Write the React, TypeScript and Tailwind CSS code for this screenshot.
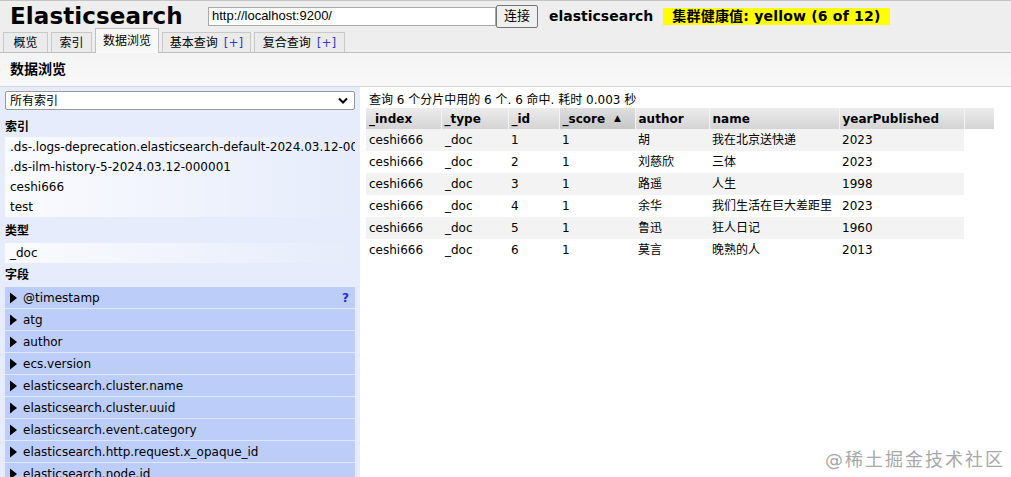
import React from 'react';

const tabs = [
  { label: '概览', w: 'w-[45px]', active: false, plus: false },
  { label: '索引', w: 'w-[41px]', active: false, plus: false },
  { label: '数据浏览', w: 'w-[64px]', active: true, plus: false },
  { label: '基本查询', w: 'w-[89px]', active: false, plus: true },
  { label: '复合查询', w: 'w-[91px]', active: false, plus: true },
];

const indices = [
  '.ds-.logs-deprecation.elasticsearch-default-2024.03.12-000001',
  '.ds-ilm-history-5-2024.03.12-000001',
  'ceshi666',
  'test',
];

const fields = [
  '@timestamp',
  'atg',
  'author',
  'ecs.version',
  'elasticsearch.cluster.name',
  'elasticsearch.cluster.uuid',
  'elasticsearch.event.category',
  'elasticsearch.http.request.x_opaque_id',
  'elasticsearch.node.id',
  'elasticsearch.node.name',
];

const columns = [
  { key: '_index', w: 'w-[75px]' },
  { key: '_type', w: 'w-[67px]' },
  { key: '_id', w: 'w-[51px]' },
  { key: '_score', w: 'w-[76px]' },
  { key: 'author', w: 'w-[74px]' },
  { key: 'name', w: 'w-[130px]' },
  { key: 'yearPublished', w: 'w-[125px]' },
];

const rows = [
  ['ceshi666', '_doc', '1', '1', '胡', '我在北京送快递', '2023'],
  ['ceshi666', '_doc', '2', '1', '刘慈欣', '三体', '2023'],
  ['ceshi666', '_doc', '3', '1', '路遥', '人生', '1998'],
  ['ceshi666', '_doc', '4', '1', '余华', '我们生活在巨大差距里', '2023'],
  ['ceshi666', '_doc', '5', '1', '鲁迅', '狂人日记', '1960'],
  ['ceshi666', '_doc', '6', '1', '莫言', '晚熟的人', '2013'],
];

function Header() {
  return (
    <div className="h-[31px] bg-[#eeeeee] border-t border-[#c4c4c4] flex items-center shrink-0">
      <div className="pl-[10px] w-[208px] text-[23px] font-bold text-black leading-none tracking-[0.1px]">
        Elasticsearch
      </div>
      <input
        readOnly
        value="http://localhost:9200/"
        className="w-[288px] h-[19px] bg-white border border-[#a9a9a9] px-[3px] text-[13px] font-['Liberation_Sans',sans-serif] text-black outline-none"
      />
      <button className="h-[23px] w-[42px] bg-[#efefef] border border-[#767676] rounded-[2px] text-[13px] text-black flex items-center justify-center">
        连接
      </button>
      <span className="ml-[11px] text-[14px] font-bold text-black">elasticsearch</span>
      <span className="ml-[10px] h-[17px] bg-[#ffff00] px-[9px] text-[14px] font-bold text-black flex items-center tracking-[0.2px]">
        集群健康值: yellow (6 of 12)
      </span>
    </div>
  );
}

function Tabs() {
  return (
    <div className="h-[22px] bg-[#eeeeee] border-b border-[#c0c0c0] flex items-end pl-[3px] gap-[3px] shrink-0">
      {tabs.map((t) => (
        <div
          key={t.label}
          className={
            t.active
              ? `${t.w} h-[25px] -mb-px bg-[#f8f8f8] border border-b-0 border-[#c0c0c0] flex items-center justify-center text-[12px] text-black`
              : `${t.w} h-[20px] bg-[#ebebeb] border border-b-0 border-[#c8c8c8] flex items-center justify-center text-[12px] text-black`
          }
        >
          {t.label}
          {t.plus && <span className="ml-[6px] text-[#3a3ac8]">[+]</span>}
        </div>
      ))}
    </div>
  );
}

function Sidebar() {
  return (
    <div className="w-[360px] shrink-0 bg-[#e6ecfb] px-[5px] pt-[4px] overflow-hidden">
      <div className="h-[19px] bg-white border border-[#9a9a9a] rounded-[2px] flex items-center justify-between pl-[4px] pr-[6px] text-[12px] text-black">
        <span>所有索引</span>
        <svg width="10" height="7" viewBox="0 0 10 7">
          <path d="M1 1.5 L5 5.5 L9 1.5" fill="none" stroke="#000" strokeWidth="2" />
        </svg>
      </div>
      <div className="mt-[6px] h-[21px] flex items-center text-[12px] font-bold text-black">索引</div>
      {indices.map((i) => (
        <div
          key={i}
          className="h-[20px] flex items-center pl-[5px] text-[12px] text-black whitespace-nowrap overflow-hidden bg-gradient-to-r from-white/80 via-white/40 to-transparent"
        >
          {i}
        </div>
      ))}
      <div className="mt-[2px] h-[24px] flex items-center text-[12px] font-bold text-black">类型</div>
      <div className="h-[20px] flex items-center pl-[5px] text-[12px] text-black bg-gradient-to-r from-white/80 via-white/40 to-transparent">
        _doc
      </div>
      <div className="h-[24px] flex items-center text-[12px] font-bold text-black">字段</div>
      {fields.map((f, idx) => (
        <div
          key={f}
          className="h-[22px] bg-[#bccdfa] border-b border-[#dfe7fd] flex items-center pl-[4px] pr-[6px] text-[12px] text-black whitespace-nowrap"
        >
          <svg width="9" height="12" viewBox="0 0 9 12" className="mr-[5px] shrink-0">
            <path d="M1 0.5 L8 6 L1 11.5 Z" fill="#000" />
          </svg>
          <span className="flex-1">{f}</span>
          {idx === 0 && <span className="font-bold text-[#2a2ad0]">?</span>}
        </div>
      ))}
    </div>
  );
}

function Results() {
  return (
    <div className="flex-1 bg-white pt-[5px] overflow-hidden">
      <div className="pl-[9px] h-[16px] leading-[16px] text-[12px] text-black">
        查询 6 个分片中用的 6 个. 6 命中. 耗时 0.003 秒
      </div>
      <table className="ml-[6px] table-fixed border-collapse text-[12px] text-black">
        <thead>
          <tr className="h-[21px]">
            {columns.map((c) => (
              <th
                key={c.key}
                className={
                  c.key === '_score'
                    ? `${c.w} p-0 pl-[3px] text-left font-bold border-r border-[#f4f4f4] bg-gradient-to-b from-[#dedede] to-[#c6c6c6]`
                    : `${c.w} p-0 pl-[3px] text-left font-bold border-r border-[#f4f4f4] bg-gradient-to-b from-[#ececec] to-[#d4d4d4]`
                }
              >
                {c.key === '_score' ? (
                  <span className="flex items-center">
                    _score
                    <span className="ml-[9px] text-[9px]">▲</span>
                  </span>
                ) : (
                  c.key
                )}
              </th>
            ))}
            <th className="w-[30px] p-0 bg-gradient-to-b from-[#ececec] to-[#d4d4d4]" />
          </tr>
        </thead>
        <tbody>
          {rows.map((r, ri) => (
            <tr key={ri} className="h-[22px]">
              {r.map((v, ci) => (
                <td
                  key={ci}
                  className={`p-0 whitespace-nowrap overflow-hidden ${ri % 2 === 0 ? 'bg-[#f3f3f3]' : 'bg-white'} ${ci === 1 ? 'pl-[4px]' : 'pl-[3px]'}`}
                >
                  {v}
                </td>
              ))}
              <td className="p-0 bg-white" />
            </tr>
          ))}
        </tbody>
      </table>
    </div>
  );
}

export default function App() {
  return (
    <div className="relative w-[1011px] h-[477px] overflow-hidden flex flex-col bg-white font-['DejaVu_Sans','Noto_Sans_CJK_SC',sans-serif]">
      <Header />
      <Tabs />
      <div className="h-[34px] bg-gradient-to-b from-[#f4f4f4] to-[#f9f9f9] border-b border-[#d6d6d6] flex items-center pl-[10px] text-[14px] font-bold text-black shrink-0">
        数据浏览
      </div>
      <div className="flex flex-1 min-h-0">
        <Sidebar />
        <Results />
      </div>
      <div className="absolute right-[6px] bottom-[4px] text-[18px] tracking-[2px] text-[#a8a8a8]">
        @稀土掘金技术社区
      </div>
    </div>
  );
}
